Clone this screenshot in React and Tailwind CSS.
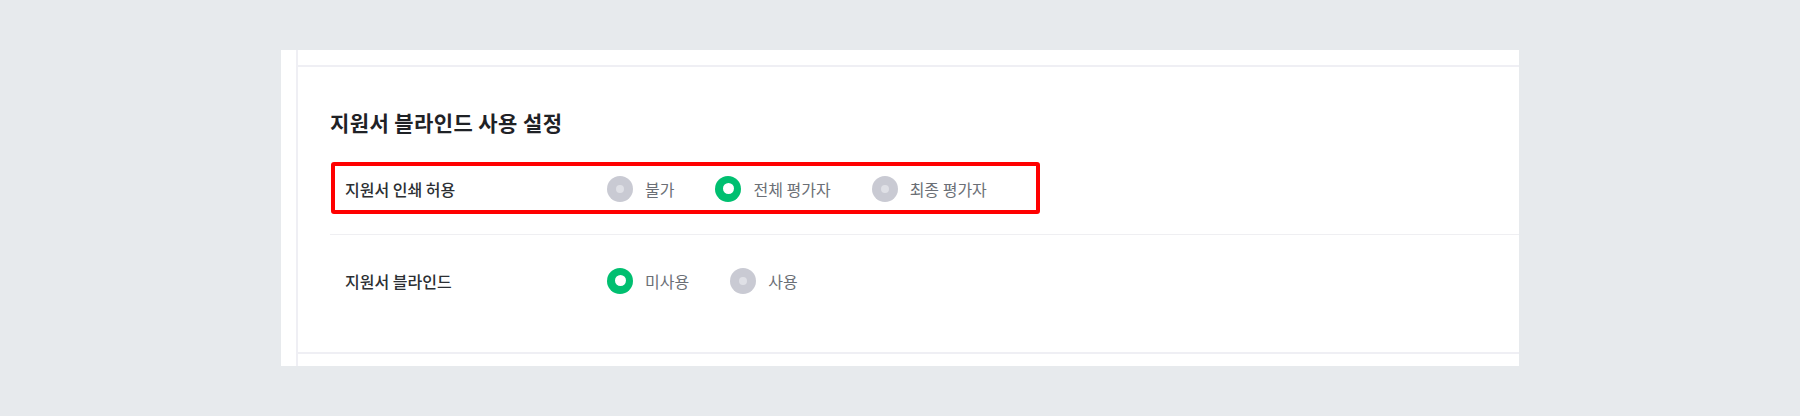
import React, { useState } from "react";

const font = { fontFamily: '"Noto Sans CJK KR", "Noto Sans", sans-serif' };

function Radio({ checked, label, onClick }) {
  return (
    <button onClick={onClick} className="flex items-center gap-[12px] mr-[41px]">
      {checked ? (
        <span className="w-[26px] h-[26px] rounded-full bg-[#00bf70] flex items-center justify-center">
          <span className="w-[11px] h-[11px] rounded-full bg-white" />
        </span>
      ) : (
        <span className="w-[26px] h-[26px] rounded-full bg-[#c9cad3] flex items-center justify-center">
          <span className="w-[8px] h-[8px] rounded-full bg-[#dfe0e6]" />
        </span>
      )}
      <span className="text-[16px] text-[#6b6f76]">{label}</span>
    </button>
  );
}

function SettingRow({ title, options, value, onChange, children }) {
  return (
    <div className="relative h-[91px] flex items-center pl-[15px]">
      <div className="w-[262px] text-[16px] font-medium text-[#2c2f33]">{title}</div>
      <div className="flex items-center">
        {options.map((o) => (
          <Radio
            key={o.id}
            label={o.label}
            checked={value === o.id}
            onClick={() => onChange(o.id)}
          />
        ))}
      </div>
      {children}
    </div>
  );
}

export default function App() {
  const [print, setPrint] = useState("all");
  const [blind, setBlind] = useState("off");

  const printOptions = [
    { id: "no", label: "불가" },
    { id: "all", label: "전체 평가자" },
    { id: "final", label: "최종 평가자" },
  ];
  const blindOptions = [
    { id: "off", label: "미사용" },
    { id: "on", label: "사용" },
  ];

  return (
    <div className="w-[1800px] h-[416px] bg-[#e7eaed] pt-[50px] pl-[281px]" style={font}>
      <div className="w-[1238px] h-[316px] bg-white flex">
        <div className="w-[15px]" />
        <div className="flex-1 border-l-2 border-[#efeff4] flex flex-col">
          <div className="h-[15px]" />
          <div className="flex-1 border-y-2 border-[#efeff4] pl-[32px] pt-[41px]">
            <h2 className="text-[21px] font-bold text-[#1f2226] leading-[28px] tracking-[0.4px]">
              지원서 블라인드 사용 설정
            </h2>

            <div className="mt-[7px] border-b border-[#efeff2]">
              <SettingRow
                title="지원서 인쇄 허용"
                options={printOptions}
                value={print}
                onChange={setPrint}
              >
                {/* highlight box */}
                <div className="absolute left-[1px] top-[19px] w-[709px] h-[52px] border-[4px] border-[#ff0000] rounded-[3px] pointer-events-none" />
              </SettingRow>
            </div>

            <SettingRow
              title="지원서 블라인드"
              options={blindOptions}
              value={blind}
              onChange={setBlind}
            />
          </div>
          <div className="h-[12px]" />
        </div>
      </div>
    </div>
  );
}
